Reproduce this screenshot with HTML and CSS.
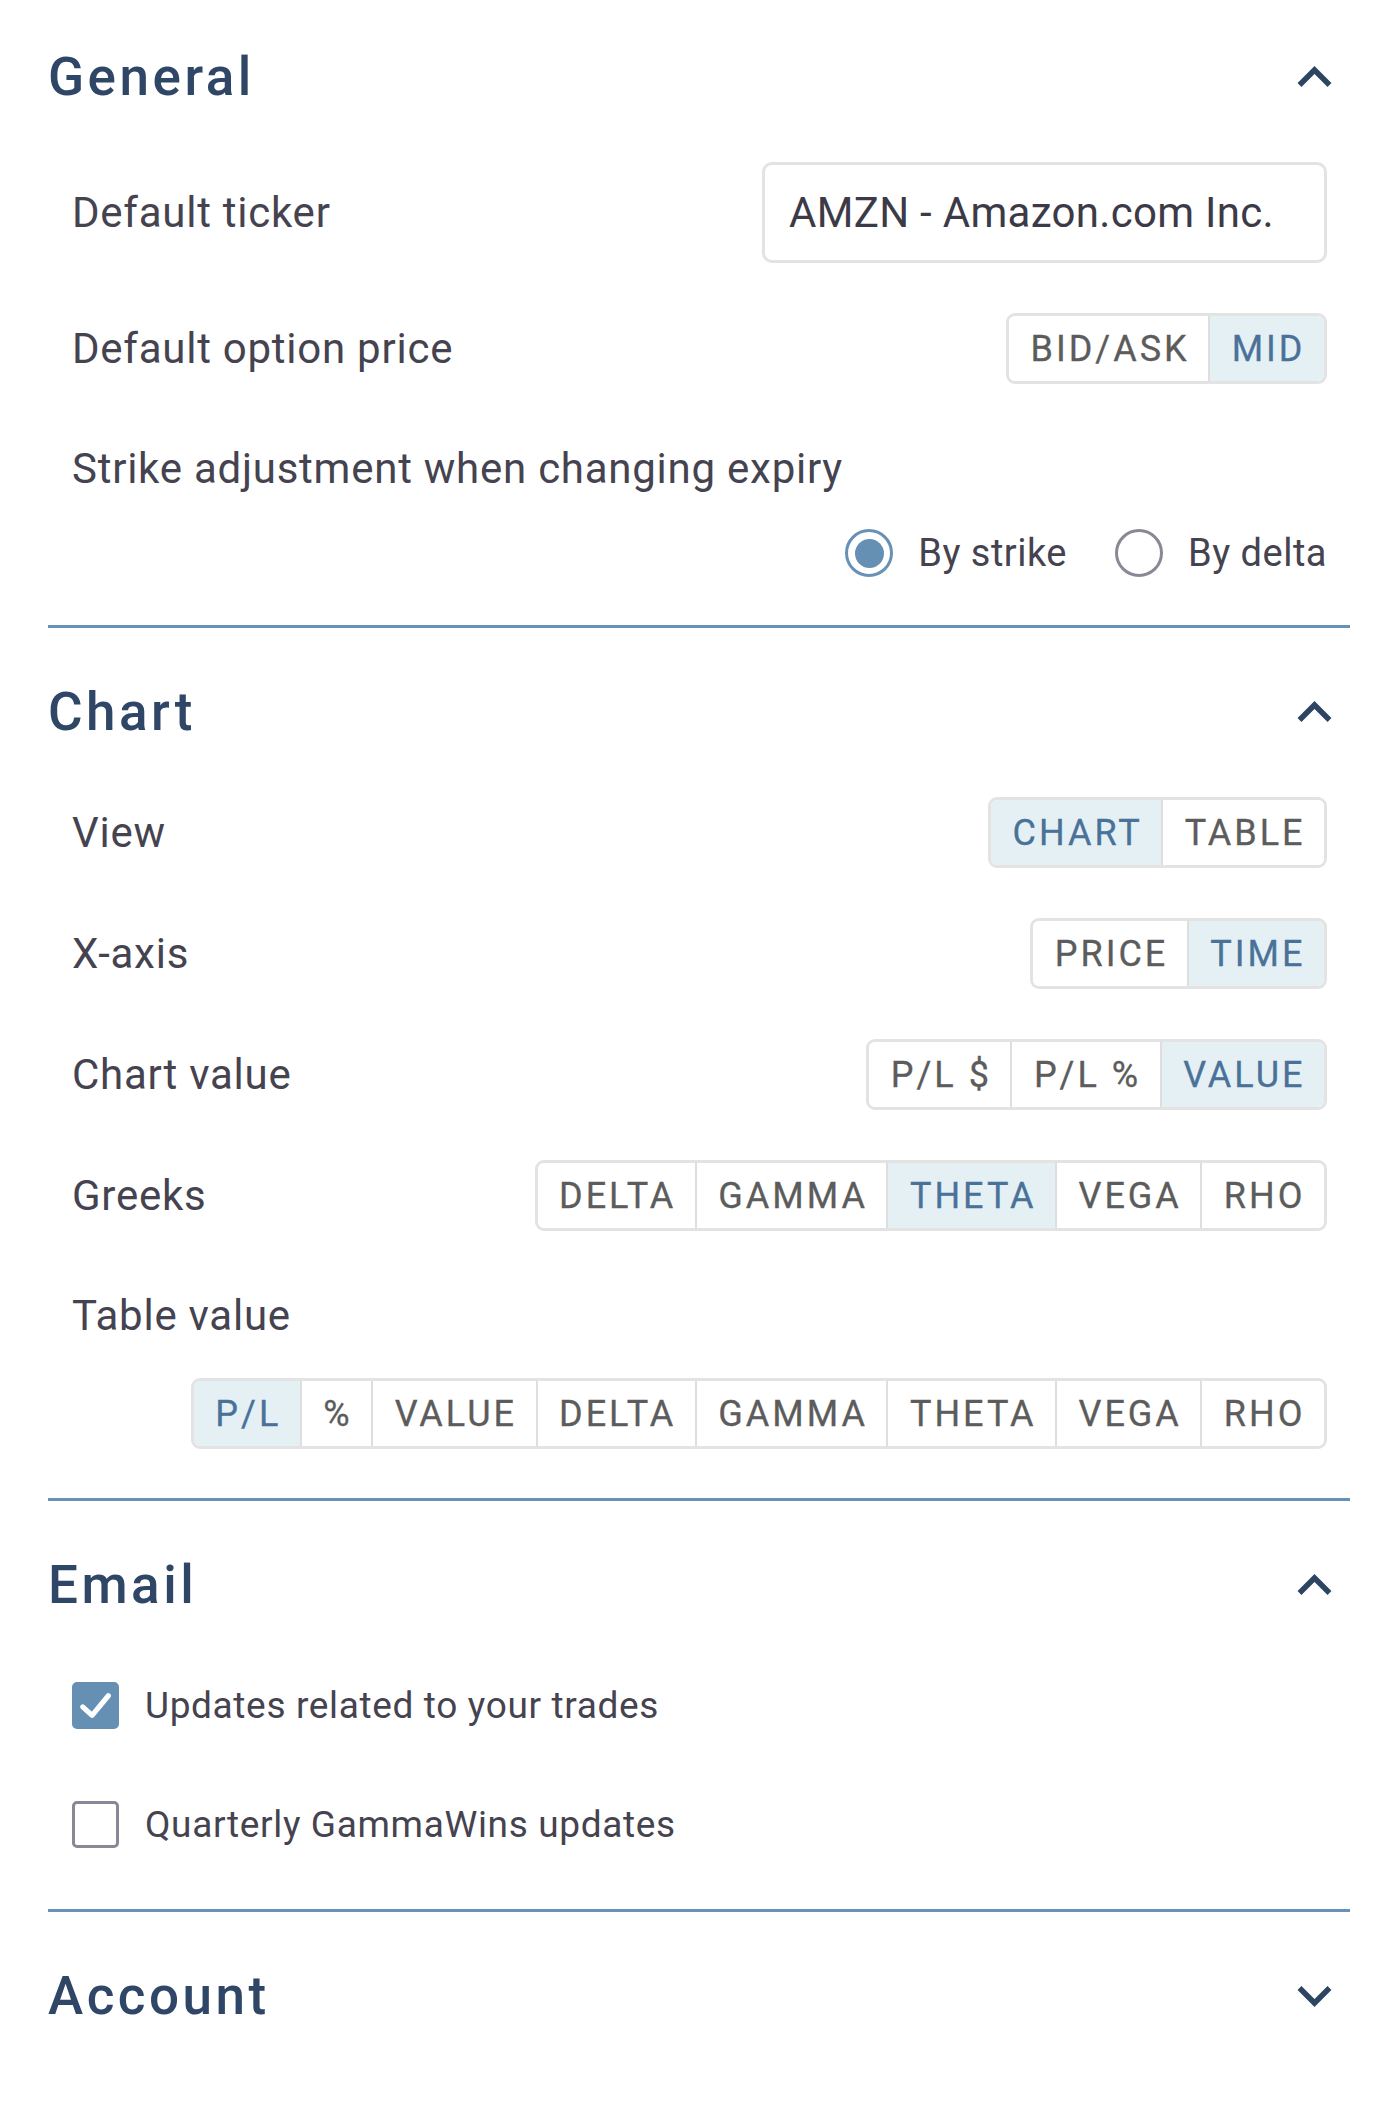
FILE: index.html
```html
<!DOCTYPE html>
<html lang="en">
<head>
<meta charset="utf-8">
<title>Settings</title>
<link rel="stylesheet" href="styles.css">
</head>
<body>
<div class="page">

  <section class="section">
    <div class="section-head">
      <h2 class="section-title">General</h2>
      <svg class="chev" viewBox="0 0 36 22"><polyline points="3,19 18,4 33,19"/></svg>
    </div>
    <div class="section-body">
      <div class="row">
        <span class="label">Default ticker</span>
        <div class="ticker">AMZN - Amazon.com Inc.</div>
      </div>
      <div class="row">
        <span class="label">Default option price</span>
        <div class="seg">
          <span class="seg-item">BID/ASK</span>
          <span class="seg-item active">MID</span>
        </div>
      </div>
      <div class="row stacked">
        <span class="label">Strike adjustment when changing expiry</span>
        <div class="radios">
          <label class="radio"><span class="radio-dot checked"></span><span class="radio-text">By strike</span></label>
          <label class="radio"><span class="radio-dot"></span><span class="radio-text">By delta</span></label>
        </div>
      </div>
    </div>
  </section>

  <section class="section">
    <div class="section-head">
      <h2 class="section-title">Chart</h2>
      <svg class="chev" viewBox="0 0 36 22"><polyline points="3,19 18,4 33,19"/></svg>
    </div>
    <div class="section-body">
      <div class="row">
        <span class="label">View</span>
        <div class="seg">
          <span class="seg-item active">CHART</span>
          <span class="seg-item">TABLE</span>
        </div>
      </div>
      <div class="row">
        <span class="label">X-axis</span>
        <div class="seg">
          <span class="seg-item">PRICE</span>
          <span class="seg-item active">TIME</span>
        </div>
      </div>
      <div class="row">
        <span class="label">Chart value</span>
        <div class="seg">
          <span class="seg-item">P/L $</span>
          <span class="seg-item">P/L %</span>
          <span class="seg-item active">VALUE</span>
        </div>
      </div>
      <div class="row">
        <span class="label">Greeks</span>
        <div class="seg">
          <span class="seg-item">DELTA</span>
          <span class="seg-item">GAMMA</span>
          <span class="seg-item active">THETA</span>
          <span class="seg-item">VEGA</span>
          <span class="seg-item">RHO</span>
        </div>
      </div>
      <div class="row stacked wide-gap">
        <span class="label">Table value</span>
        <div class="seg">
          <span class="seg-item active">P/L</span>
          <span class="seg-item">%</span>
          <span class="seg-item">VALUE</span>
          <span class="seg-item">DELTA</span>
          <span class="seg-item">GAMMA</span>
          <span class="seg-item">THETA</span>
          <span class="seg-item">VEGA</span>
          <span class="seg-item">RHO</span>
        </div>
      </div>
    </div>
  </section>

  <section class="section">
    <div class="section-head">
      <h2 class="section-title">Email</h2>
      <svg class="chev" viewBox="0 0 36 22"><polyline points="3,19 18,4 33,19"/></svg>
    </div>
    <div class="section-body email-body">
      <label class="check-row">
        <span class="checkbox checked"><svg viewBox="0 0 48 48"><polyline points="9,25 20,35 39,12"/></svg></span>
        <span class="check-text">Updates related to your trades</span>
      </label>
      <label class="check-row">
        <span class="checkbox"></span>
        <span class="check-text">Quarterly GammaWins updates</span>
      </label>
    </div>
  </section>

  <section class="section collapsed">
    <div class="section-head">
      <h2 class="section-title">Account</h2>
      <svg class="chev" viewBox="0 0 36 22"><polyline points="3,3 18,18 33,3"/></svg>
    </div>
  </section>

</div>
</body>
</html>
```

FILE: styles.css
```css
* { box-sizing: border-box; }

html, body {
  margin: 0;
  padding: 0;
  background: #ffffff;
}

body {
  font-family: Roboto, "Noto Sans", "Liberation Sans", sans-serif;
  color: #45434f;
}

.page {
  padding: 0 48px;
}

.section {
  border-bottom: 3px solid #6891b7;
}

.section + .section {
  padding-top: 7px;
}

.section.collapsed {
  border-bottom: none;
}

.section-head {
  height: 154px;
  display: flex;
  align-items: center;
  justify-content: space-between;
  padding-right: 17px;
}

.section-title {
  margin: 0;
  font-size: 53px;
  font-weight: 500;
  letter-spacing: 3.5px;
  color: #2f4666;
  line-height: 1;
}

.chev {
  width: 37px;
  height: 22px;
  fill: none;
  stroke: #2d4562;
  stroke-width: 5.5;
  stroke-linecap: butt;
  stroke-linejoin: miter;
}

.section-body {
  display: flex;
  flex-direction: column;
  gap: 50px;
  padding: 8px 23px 48px 24px;
}

.row {
  display: flex;
  align-items: center;
  justify-content: space-between;
}

.row.stacked {
  flex-direction: column;
  align-items: stretch;
  gap: 35px;
  padding-top: 10px;
}

.row.stacked.wide-gap {
  gap: 37px;
  margin-bottom: 1px;
}

.row.stacked .label {
  line-height: 50px;
}

.row.stacked .seg,
.row.stacked .radios {
  align-self: flex-end;
}

.label {
  font-size: 42px;
  letter-spacing: 0.75px;
  color: #45434f;
  line-height: 50px;
}

.ticker {
  width: 565px;
  height: 101px;
  border: 3px solid #e3e3e3;
  border-radius: 10px;
  padding-left: 24px;
  display: flex;
  align-items: center;
  font-size: 42px;
  letter-spacing: 0.3px;
  color: #3c3a47;
}

.seg {
  display: inline-flex;
  border: 3px solid #e3e3e3;
  border-radius: 9px;
  overflow: hidden;
  height: 71px;
}

.seg-item {
  display: flex;
  align-items: center;
  padding: 0 18.5px 0 21.5px;
  font-size: 36px;
  font-weight: 400;
  letter-spacing: 3px;
  color: #5c5c5c;
  background: #ffffff;
  -webkit-text-stroke: 0.3px currentColor;
}

.seg-item + .seg-item {
  border-left: 2px solid #dedede;
}

.seg-item.active {
  background: #e5f0f5;
  color: #4a7299;
}

.radios {
  display: flex;
  align-items: center;
  gap: 48px;
  height: 48px;
}

.radio {
  display: flex;
  align-items: center;
  gap: 25px;
}

.radio-dot {
  width: 48px;
  height: 48px;
  border-radius: 50%;
  border: 3px solid #8b8896;
  display: flex;
  align-items: center;
  justify-content: center;
}

.radio-dot.checked {
  border-color: #6891b7;
}

.radio-dot.checked::after {
  content: "";
  width: 29px;
  height: 29px;
  border-radius: 50%;
  background: #6590b4;
}

.radio-text {
  font-size: 38px;
  letter-spacing: 0.5px;
  color: #45434f;
}

.email-body {
  gap: 48px;
  padding-left: 24px;
  padding-bottom: 49px;
}

.check-row {
  display: flex;
  align-items: center;
  gap: 26px;
  height: 71px;
}

.checkbox {
  width: 47px;
  height: 47px;
  border-radius: 5px;
  border: 3px solid #8b8896;
  display: flex;
  align-items: center;
  justify-content: center;
}

.checkbox.checked {
  background: #6590b4;
  border-color: #6590b4;
}

.checkbox svg {
  width: 44px;
  height: 44px;
  fill: none;
  stroke: #ffffff;
  stroke-width: 6;
  stroke-linecap: round;
  stroke-linejoin: round;
}

.check-text {
  font-size: 37px;
  letter-spacing: 0.65px;
  color: #45434f;
}
```
